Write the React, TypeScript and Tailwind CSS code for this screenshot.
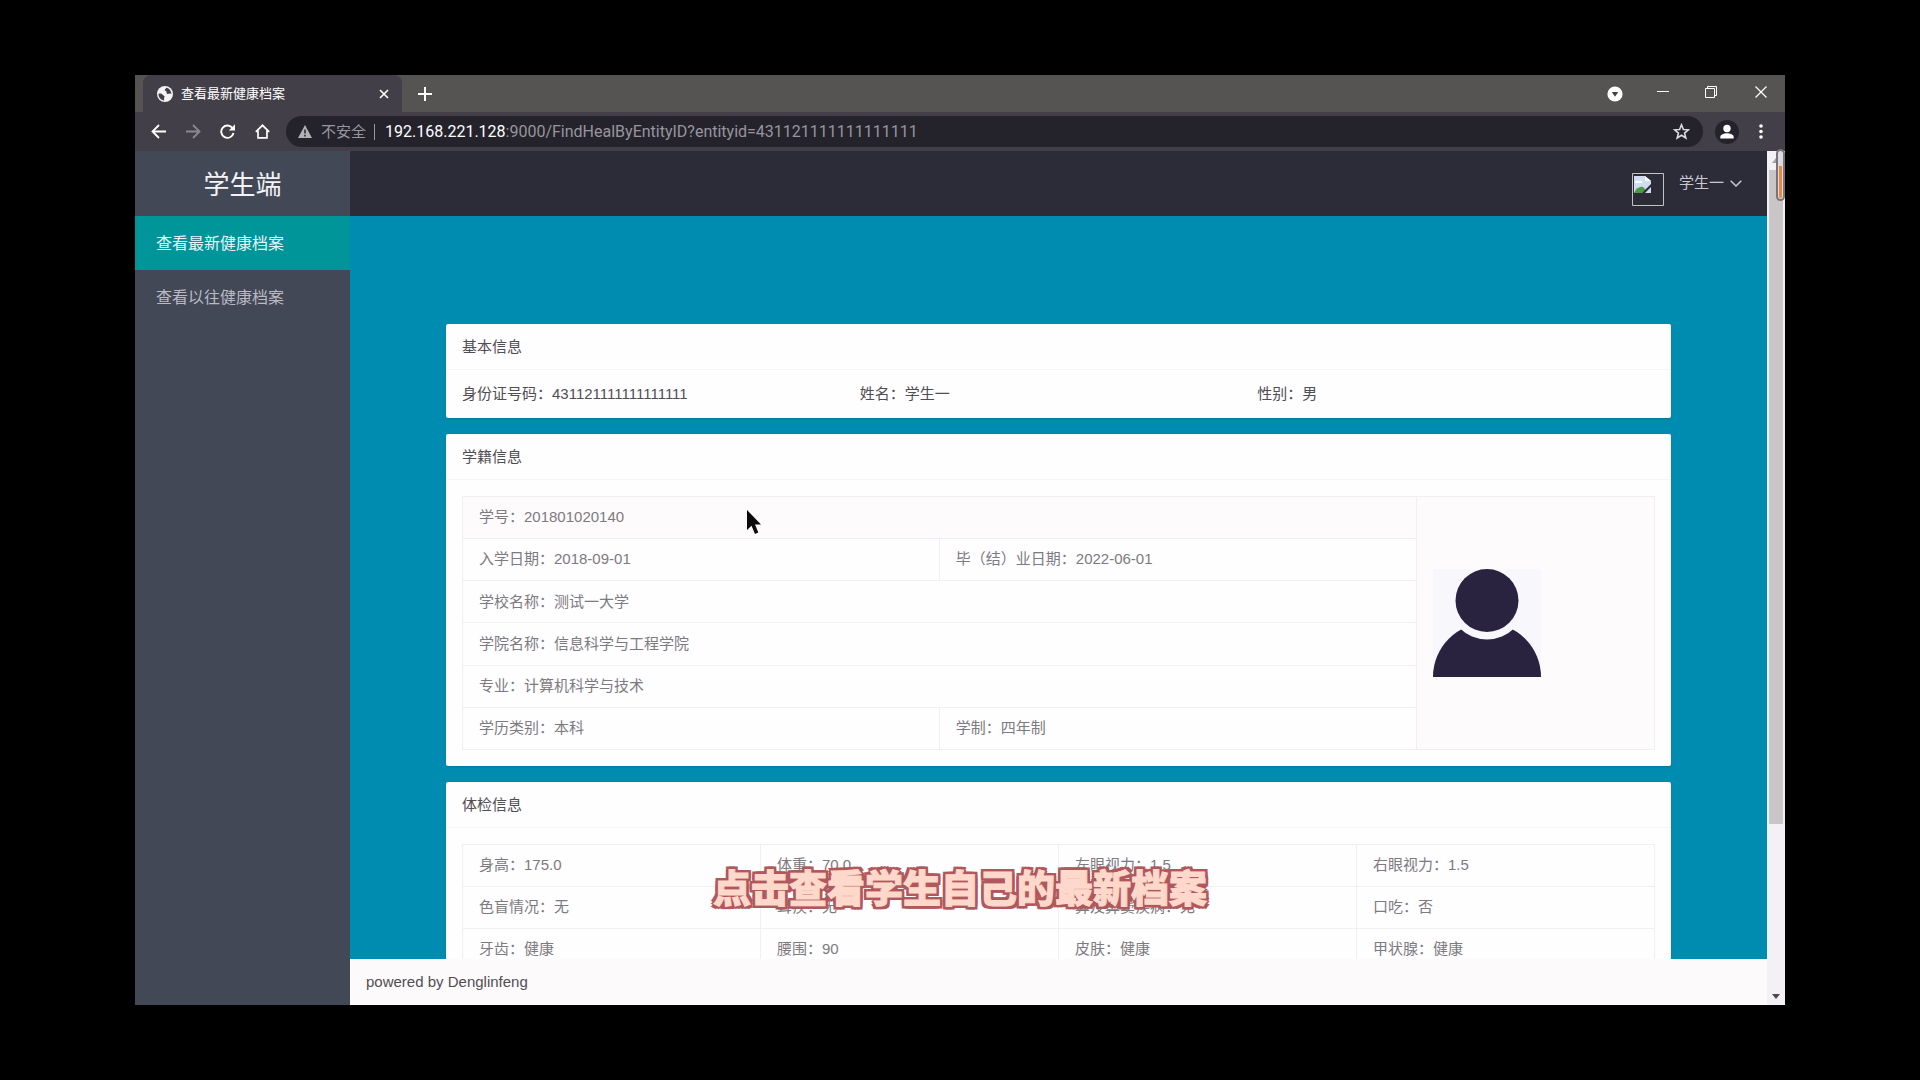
import { useState } from 'react';
import type { ReactNode } from 'react';

const menuItems = ['查看最新健康档案', '查看以往健康档案'];

const examRows = [
  ['身高：175.0', '体重：70.0', '左眼视力：1.5', '右眼视力：1.5'],
  ['色盲情况：无', '耳疾：无', '鼻及鼻窦疾病：无', '口吃：否'],
  ['牙齿：健康', '腰围：90', '皮肤：健康', '甲状腺：健康'],
];

const BrowserBar = () => (
  <div className="shrink-0 bg-[#433f48] font-['Open_Sans','Noto_Sans_CJK_SC',sans-serif]">
    {/* Tab strip */}
    <div className="flex h-[37px] items-end bg-[#565452] pl-2">
      <div className="flex h-[37px] w-[259px] items-center rounded-t-lg bg-[#433f48] pl-3.5 pr-2.5 text-white">
        <svg viewBox="0 0 16 16" className="h-4 w-4 shrink-0" aria-hidden="true">
          <circle cx="8" cy="8" r="8" fill="#f4f2f5" />
          <path
            d="M2 7.500c1.600-.2 3 .2 3.600 1.200.5 1 1.800.6 2 1.800.1.8-.7 1.200-.6 2.400l.2 1.600C4 14.200 1.500 11.500 1.500 8Z M9.500 1.700c-.3 1-1.600 1-1.700 2-.1 1.200 1 1 1.600 1.800.6.900-.4 1.800.6 2.300 1.200.5 2-.6 3.200-.2l1.200.4c0-3-2-5.700-4.900-6.300Z"
            fill="#433f48"
          />
        </svg>
        <span className="ml-2 flex-1 text-[13px]">查看最新健康档案</span>
        <button aria-label="关闭标签页" className="flex h-4 w-4 items-center justify-center">
          <svg viewBox="0 0 10 10" className="h-[10px] w-[10px]" fill="none" stroke="currentColor" strokeWidth="1.600">
            <path d="M1 1l8 8M9 1L1 9" />
          </svg>
        </button>
      </div>
      <button aria-label="新标签页" className="ml-[15px] flex h-[37px] w-4 items-center justify-center text-white">
        <svg viewBox="0 0 14 14" className="h-[14px] w-[14px]" fill="none" stroke="currentColor" strokeWidth="2">
          <path d="M7 0v14M0 7h14" />
        </svg>
      </button>

      <div className="ml-auto flex h-[33px] items-center self-start pr-[18px] text-white">
        <button aria-label="搜索标签页" className="mr-[34px] mt-1">
          <svg viewBox="0 0 16 16" className="h-4 w-4">
            <circle cx="8" cy="8" r="7.600" fill="#fff" />
            <path d="M4.800 6h6.400L8 10.800Z" fill="#433f48" />
          </svg>
        </button>
        <button aria-label="最小化" className="mr-9">
          <svg viewBox="0 0 12 12" className="h-3 w-3" fill="none" stroke="currentColor">
            <path d="M0 5.500h12" />
          </svg>
        </button>
        <button aria-label="还原" className="mr-[38px]">
          <svg viewBox="0 0 12 12" className="h-3 w-3" fill="none" stroke="currentColor">
            <path d="M.5 2.500h9v9h-9zM2.500 2.500v-2h9v9h-2" />
          </svg>
        </button>
        <button aria-label="关闭">
          <svg viewBox="0 0 12 12" className="h-3 w-3" fill="none" stroke="currentColor" strokeWidth="1.200">
            <path d="M.5.5l11 11M11.500.5l-11 11" />
          </svg>
        </button>
      </div>
    </div>

    {/* Address row */}
    <div className="flex h-[39px] items-center pl-4 pr-[22px] text-white">
      <button aria-label="后退" className="mr-5">
        <svg viewBox="0 0 15 15" className="h-[15px] w-[15px]" fill="none" stroke="currentColor" strokeWidth="1.800">
          <path d="M15 7.500H1.500M8 1L1.500 7.500 8 14" />
        </svg>
      </button>
      <button aria-label="前进" className="mr-[19px] text-[#8b878f]">
        <svg viewBox="0 0 15 15" className="h-[15px] w-[15px]" fill="none" stroke="currentColor" strokeWidth="1.800">
          <path d="M0 7.500h13.500M7 1l6.500 6.500L7 14" />
        </svg>
      </button>
      <button aria-label="重新加载" className="mr-5">
        <svg viewBox="0 0 15 15" className="h-[15px] w-[15px]">
          <path d="M12.600 4.200A6.200 6.200 0 1 0 13.500 9" fill="none" stroke="currentColor" strokeWidth="1.900" />
          <path d="M15 .3V6.500H8.800Z" fill="currentColor" />
        </svg>
      </button>
      <button aria-label="主页" className="mr-4">
        <svg viewBox="0 0 15 15" className="h-[15px] w-[15px]" fill="none" stroke="currentColor" strokeWidth="1.700">
          <path d="M.8 7.800L7.500 1.300l6.700 6.500M3 6.500v7.300h9V6.500" />
        </svg>
      </button>
      <div className="flex h-[31px] flex-1 items-center rounded-full bg-[#24232c] px-3 text-[15px] text-[#98959d]">
        <svg viewBox="0 0 14 13" className="h-[13px] w-[14px]" aria-hidden="true">
          <path d="M7 0l7 13H0Z" fill="#b3b0b6" />
          <path d="M7 4.500v4M7 9.800v1.600" stroke="#24232c" strokeWidth="1.500" />
        </svg>
        <span className="ml-[9px]">不安全</span>
        <span className="ml-2 mr-2.5 h-4 w-px bg-[#98959d]" />
        <div className="flex-1 font-['Roboto',sans-serif] text-base leading-[31px]">
          <span className="text-white">192.168.221.128</span>
          :9000/FindHealByEntityID?entityid=431121111111111111
        </div>
        <button aria-label="收藏" className="mr-px">
          <svg viewBox="0 0 24 24" className="h-[17px] w-[17px]" fill="none" stroke="#dedce0" strokeWidth="2.200">
            <path d="M12 2.500l2.700 6.600 7.100.5-5.500 4.600 1.800 6.900-6.100-3.800-6.100 3.800 1.800-6.900-5.500-4.600 7.100-.5Z" />
          </svg>
        </button>
      </div>
      <button aria-label="用户" className="ml-3">
        <svg viewBox="0 0 24 24" className="h-6 w-6">
          <circle cx="12" cy="12" r="12" fill="#24232c" />
          <circle cx="12" cy="8.500" r="3.700" fill="#fff" />
          <path d="M5.300 18.500v-1.600c0-2.300 4-3.600 6.700-3.600s6.700 1.300 6.700 3.600v1.600Z" fill="#fff" />
        </svg>
      </button>
      <button aria-label="菜单" className="ml-5">
        <svg viewBox="0 0 4 15" className="h-[15px] w-1" fill="currentColor">
          <circle cx="2" cy="2" r="1.800" />
          <circle cx="2" cy="7.500" r="1.800" />
          <circle cx="2" cy="13" r="1.800" />
        </svg>
      </button>
    </div>
  </div>
);

const Card = ({ title, children }: { title: string; children: ReactNode }) => (
  <section className="mb-4 rounded-xs bg-[#fefdff] shadow-sm">
    <h2 className="h-[46px] border-b border-[#f7f5f8] px-4 leading-[45px] text-[#504d53]">{title}</h2>
    {children}
  </section>
);

const cell = 'h-[42px] border border-[#f1eff4] px-4';

const StudentTable = () => (
  <table className="h-[254px] w-full table-fixed border-collapse text-[#7d7a80]">
    <colgroup>
      <col className="w-2/5" />
      <col className="w-2/5" />
      <col className="w-1/5" />
    </colgroup>
    <tbody>
      <tr>
        <td colSpan={2} className={`${cell} bg-[#fefbfc]`}>学号：201801020140</td>
        <td rowSpan={6} className={`${cell} bg-[#fefbfc]`}>
          <svg viewBox="0 0 108 108" className="h-[108px] w-[108px]" role="img" aria-label="照片">
            <path d="M0 0h108v108H0z" fill="#f8f7fc" />
            <path d="M0 108a54 54 0 0 1 108 0Z" fill="#29233f" />
            <circle cx="54" cy="31.500" r="39" fill="#f8f7fc" />
            <circle cx="54" cy="31.500" r="31.500" fill="#29233f" />
          </svg>
        </td>
      </tr>
      <tr>
        <td className={cell}>入学日期：2018-09-01</td>
        <td className={cell}>毕（结）业日期：2022-06-01</td>
      </tr>
      <tr>
        <td colSpan={2} className={cell}>学校名称：测试一大学</td>
      </tr>
      <tr>
        <td colSpan={2} className={cell}>学院名称：信息科学与工程学院</td>
      </tr>
      <tr>
        <td colSpan={2} className={cell}>专业：计算机科学与技术</td>
      </tr>
      <tr>
        <td className={cell}>学历类别：本科</td>
        <td className={cell}>学制：四年制</td>
      </tr>
    </tbody>
  </table>
);

const Scrollbar = () => (
  <div className="relative flex w-[18px] shrink-0 flex-col items-center bg-[#f3f1f5]">
    <div className="flex h-[19px] shrink-0 items-center">
      <svg viewBox="0 0 8 5" className="h-[5px] w-2" fill="#a5a2a7">
        <path d="M0 5L4 0l4 5Z" />
      </svg>
    </div>
    <div className="min-h-0 w-full flex-1 px-0.5">
      <div className="h-4/5 bg-[#cac6c8]" />
    </div>
    <div className="flex h-[17px] shrink-0 items-center">
      <svg viewBox="0 0 8 5" className="h-[5px] w-2" fill="#4b494e">
        <path d="M0 0h8L4 5Z" />
      </svg>
    </div>
    {/* Recorder level marker */}
    <div className="absolute -top-0.5 right-0 flex h-[52px] w-[9px] items-end rounded-full border-2 border-[#77737a] bg-[#dedadd] px-px pb-px">
      <div className="h-8 w-full rounded-b-full bg-[#e8893f]" />
    </div>
  </div>
);

const App = () => {
  const [active, setActive] = useState(0);

  return (
    <div className="min-h-screen bg-black px-[135px] py-[75px] font-['Liberation_Sans','Noto_Sans_CJK_SC',sans-serif] text-[15px]">
      <div className="relative flex h-[calc(100vh-150px)] flex-col overflow-hidden">
        <BrowserBar />

        <div className="flex min-h-0 flex-1">
          <aside className="w-[215px] shrink-0 bg-[#424856]">
            <h1 className="h-[65px] text-center text-[26px] leading-[68px] text-[#f3f2f6]">学生端</h1>
            <nav>
              {menuItems.map((item, i) => (
                <a
                  key={item}
                  href="#"
                  onClick={() => setActive(i)}
                  className={`block h-[54px] px-[21px] text-base leading-[55px] ${
                    i === active ? 'bg-[#009598] text-[#e4f6f7]' : 'text-[#bab9c4]'
                  }`}
                >
                  {item}
                </a>
              ))}
            </nav>
          </aside>

          <div className="flex min-w-0 flex-1 flex-col">
            <header className="flex h-[65px] shrink-0 justify-end bg-[#2c2b38] pr-[25px]">
              <svg viewBox="0 0 32 33" className="mt-[22px] h-[33px] w-8" role="img" aria-label="头像">
                <path d="M.5.5h31v32H.5z" fill="none" stroke="#c4c2c9" />
                <path d="M2 3h11l6 5v12H2z" fill="#cfdcf2" />
                <path d="M13 3v5h6Z" fill="#fff" />
                <path d="M3 10c0-2 2-3 3.500-2C8 6.500 11 8 10.500 10Z" fill="#fff" />
                <path d="M2 20c2-5 6-7 9-6l3 3-4 3Z" fill="#4b9b45" />
                <path d="M10 20l9-9v3l-6 6Z" fill="#2c2b38" />
              </svg>
              <button className="ml-[15px] flex h-[65px] items-center text-[#c9c8d0]">
                学生一
                <svg viewBox="0 0 12 7" className="ml-1.5 h-[7px] w-3" fill="none" stroke="currentColor" strokeWidth="1.500">
                  <path d="M.7.7L6 6 11.300.7" />
                </svg>
              </button>
            </header>

            <main className="min-h-0 flex-1 overflow-hidden bg-[#008cb1] px-24 pt-[108px]">
              <Card title="基本信息">
                <div className="grid h-12 grid-cols-3 items-center px-4 text-[#504d53]">
                  <span>身份证号码：431121111111111111</span>
                  <span>姓名：学生一</span>
                  <span>性别：男</span>
                </div>
              </Card>
              <Card title="学籍信息">
                <div className="p-4">
                  <StudentTable />
                </div>
              </Card>
              <Card title="体检信息">
                <div className="p-4">
                  <table className="w-full table-fixed border-collapse text-[#7d7a80]">
                    <tbody>
                      {examRows.map((row) => (
                        <tr key={row[0]}>
                          {row.map((text) => (
                            <td key={text} className={cell}>{text}</td>
                          ))}
                        </tr>
                      ))}
                    </tbody>
                  </table>
                </div>
              </Card>
            </main>

            <footer className="h-[46px] shrink-0 bg-[#fdfafc] px-4 leading-[46px] text-[#514e54]">
              powered by Denglinfeng
            </footer>
          </div>

          <Scrollbar />
        </div>

        {/* Mouse pointer */}
        <svg viewBox="0 0 14 24" className="absolute left-[612px] top-[435px] h-6 w-3.5" aria-hidden="true">
          <path d="M0 0v20l4.500-4.200L8 24l3.300-1.400L8 14.500h6Z" fill="#0b0a0d" />
        </svg>

        {/* Video subtitle */}
        <p className="absolute inset-x-0 bottom-[95px] text-center font-['Noto_Sans_CJK_SC',sans-serif] text-[38px] font-black leading-[48px] text-[#fdd8cb] [-webkit-text-stroke:1px_#fdd8cb] [text-shadow:3px_0_#b0585c,-3px_0_#b0585c,0_3px_#b0585c,0_-3px_#b0585c,3px_3px_#b0585c,-3px_3px_#b0585c,3px_-3px_#b0585c,-3px_-3px_#b0585c]">
          点击查看学生自己的最新档案
        </p>
      </div>
    </div>
  );
};

export default App;
